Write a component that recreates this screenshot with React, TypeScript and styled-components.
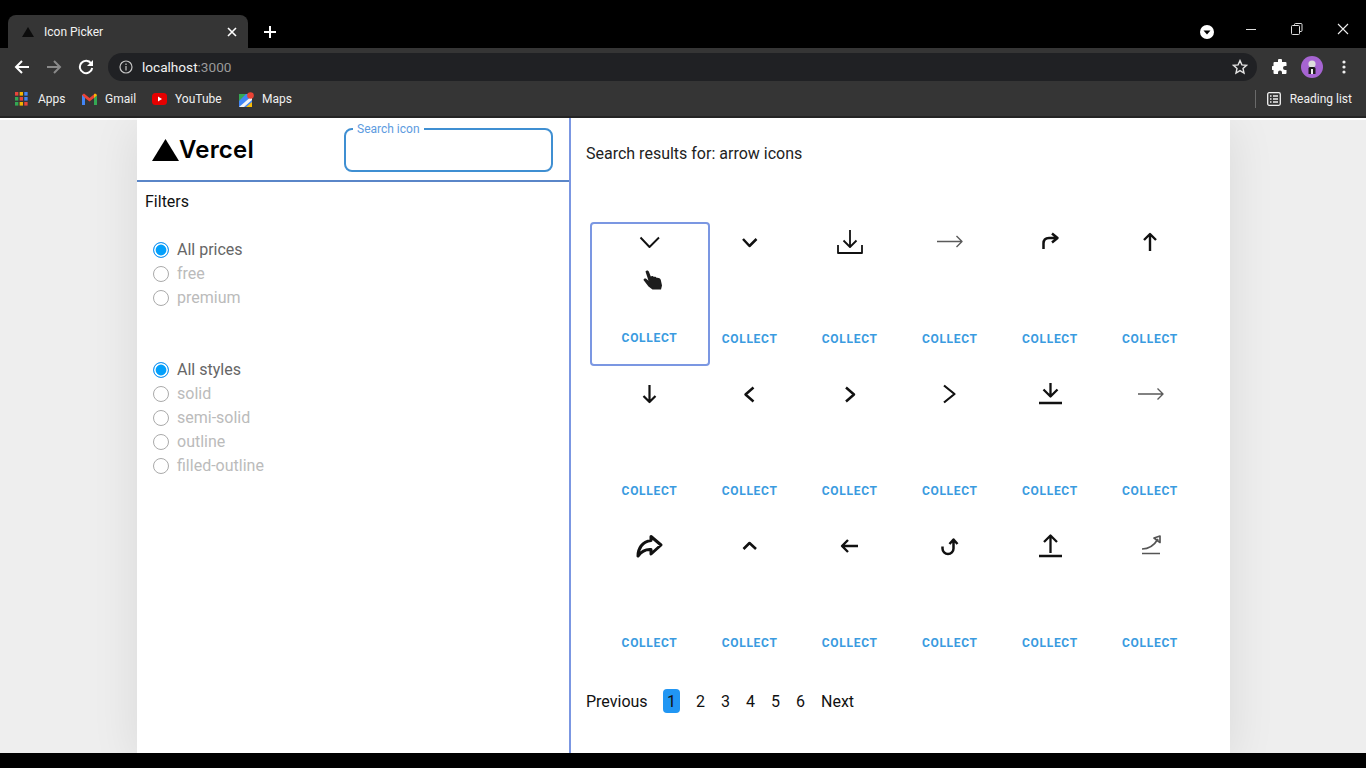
import React from "react";
import styled, { createGlobalStyle } from "styled-components";

const GlobalStyle = createGlobalStyle`
  html, body {
    margin: 0;
    padding: 0;
    background: #000;
    font-family: Roboto, "Liberation Sans", sans-serif;
  }
  * { box-sizing: border-box; }
`;

const priceOptions = ["All prices", "free", "premium"];
const styleOptions = ["All styles", "solid", "semi-solid", "outline", "filled-outline"];

type IconDef = { d: string; width: number; color?: string };

// every icon sits in a 32x32 box centred on its grid column
const icons: IconDef[] = [
  { d: "M6.5 11.5L15.5 21L25 11.5", width: 1.9 },
  { d: "M9 13L15.5 20L22.5 13", width: 2.5 },
  { d: "M16 4V21M9.5 14.5L16 21L22.5 14.5M4 19V27H28V19", width: 1.8 },
  { d: "M3 15.5H28M22.5 10L28 15.5L22.5 21", width: 1.4, color: "#5a5a5a" },
  { d: "M9.5 23V17.5Q9.5 12 15 12H23M18 7.5L23.5 12L18 16.5", width: 2.5 },
  { d: "M16 8V25M10 14L16 8L22 14", width: 2.4 },
  { d: "M15.5 7V24M9.5 18L15.5 24L21.5 18", width: 2.2 },
  { d: "M19.5 9.5L11.5 16.5L19.5 23.5", width: 2.5 },
  { d: "M12 9.5L20 16.5L12 23.5", width: 2.5 },
  { d: "M10 7.5L20.5 16L10 24.5", width: 2.2 },
  { d: "M16.5 5V18M9.5 11.5L16.5 18.5L23.5 11.5M5 25H28", width: 2.3 },
  { d: "M4 16H29M23.5 10.5L29 16L23.5 21.5", width: 1.4, color: "#5a5a5a" },
  { d: "M17 6.5L27 15L17 24V19.5C11 19 7 22 4 26C4 19 8 11.5 17 10.5Z", width: 3 },
  { d: "M9.5 19L15.5 13L22 19", width: 2.6 },
  { d: "M24 16H8M14 10L8 16L14 22", width: 2.4 },
  { d: "M19.5 10V18.5A5.5 5.5 0 0 1 8.5 18.5V16.5M15.5 14L19.5 9.5L23.5 14", width: 2.5 },
  { d: "M16.5 6V23M10 12L16.5 5.5L23 12M5 26H28", width: 2.3 },
  { d: "M8 19Q18 19 24 9M20 8L26 6L26 12.5ZM8 23.5H26", width: 1.7, color: "#555" },
];

export default function App() {
  return (
    <Screen>
      <GlobalStyle />
      <TabStrip>
        <Tab>
          <svg width="12" height="10" viewBox="0 0 12 10">
            <path d="M6 0L12 10H0Z" fill="#0c0c0c" />
          </svg>
          <TabTitle>Icon Picker</TabTitle>
          <svg width="12" height="12" viewBox="0 0 12 12" stroke="#fff" strokeWidth="1.6">
            <path d="M2 2L10 10M10 2L2 10" />
          </svg>
        </Tab>
        <NewTab>
          <svg width="14" height="14" viewBox="0 0 14 14" stroke="#fff" strokeWidth="2">
            <path d="M7 1V13M1 7H13" />
          </svg>
        </NewTab>
        <StripSpacer />
        <TabSearch>
          <svg width="14" height="14" viewBox="0 0 14 14">
            <circle cx="7" cy="7" r="7" fill="#fff" />
            <path d="M3.5 5.5H10.5L7 9.5Z" fill="#000" />
          </svg>
        </TabSearch>
        <WindowButton>
          <svg width="12" height="12" viewBox="0 0 12 12" stroke="#ddd">
            <path d="M1 6.5H11" />
          </svg>
        </WindowButton>
        <WindowButton>
          <svg width="12" height="12" viewBox="0 0 12 12" fill="none" stroke="#ddd">
            <path d="M3.5 2.5V1.5Q3.5 .5 4.5 .5H10Q11 .5 11 1.5V7.5Q11 8.5 10 8.5H9M1.5 2.5H7.5Q8.5 2.5 8.5 3.5V10.5Q8.5 11.5 7.5 11.5H1.5Q.5 11.5 .5 10.5V3.5Q.5 2.5 1.5 2.5Z" />
          </svg>
        </WindowButton>
        <WindowButton>
          <svg width="12" height="12" viewBox="0 0 12 12" stroke="#eee" strokeWidth="1.1">
            <path d="M1 1L11 11M11 1L1 11" />
          </svg>
        </WindowButton>
      </TabStrip>

      <Toolbar>
        <NavButton>
          <svg width="16" height="16" viewBox="0 0 16 16" fill="none" stroke="#fff" strokeWidth="2">
            <path d="M15 8H2M8 2L2 8L8 14" />
          </svg>
        </NavButton>
        <NavButton>
          <svg width="16" height="16" viewBox="0 0 16 16" fill="none" stroke="#8a8a8a" strokeWidth="2">
            <path d="M1 8H14M8 2L14 8L8 14" />
          </svg>
        </NavButton>
        <NavButton>
          <svg width="16" height="16" viewBox="0 0 16 16" fill="none">
            <path d="M13.2 4.5A6.2 6.2 0 1 0 14.2 9" stroke="#fff" strokeWidth="2" />
            <path d="M15 1V7H9Z" fill="#fff" />
          </svg>
        </NavButton>
        <AddressBar>
          <svg width="14" height="14" viewBox="0 0 14 14" fill="none" stroke="#c4c4c4" strokeWidth="1.2">
            <circle cx="7" cy="7" r="6" />
            <path d="M7 6V10.5M7 3.5V5" />
          </svg>
          <Url>
            localhost<UrlPort>:3000</UrlPort>
          </Url>
          <StarIcon>
            <svg width="16" height="16" viewBox="0 0 16 16" fill="none" stroke="#e4e4e4" strokeWidth="1.4">
              <path d="M8 1.6L9.9 5.9L14.5 6.3L11 9.4L12 14L8 11.6L4 14L5 9.4L1.5 6.3L6.1 5.9Z" />
            </svg>
          </StarIcon>
        </AddressBar>
        <ExtensionArea>
          <NavButton>
            <svg width="16" height="16" viewBox="0 0 16 16" fill="#fff">
              <path d="M6 1.5A2 2 0 0 1 10 1.5V3H13.5A1 1 0 0 1 14.5 4V7H13A2 2 0 0 0 13 11H14.5V14A1 1 0 0 1 13.5 15H10V13.5A2 2 0 0 0 6 13.5V15H2.5A1 1 0 0 1 1.5 14V11H1A2 2 0 0 1 1 7H1.5V4A1 1 0 0 1 2.5 3H6Z" />
            </svg>
          </NavButton>
          <NavButton>
            <svg width="22" height="22" viewBox="0 0 22 22">
              <circle cx="11" cy="11" r="11" fill="#a664d2" />
              <circle cx="11" cy="8" r="3.6" fill="#ddd" />
              <path d="M7.5 18V12.5Q7.5 11 9 11H13Q14.5 11 14.5 12.5V18Z" fill="#1b1b1b" />
              <rect x="10" y="13" width="2" height="5" fill="#eee" />
            </svg>
          </NavButton>
          <NavButton>
            <svg width="4" height="14" viewBox="0 0 4 14" fill="#eee">
              <circle cx="2" cy="2" r="1.6" />
              <circle cx="2" cy="7" r="1.6" />
              <circle cx="2" cy="12" r="1.6" />
            </svg>
          </NavButton>
        </ExtensionArea>
      </Toolbar>

      <BookmarksBar>
        <Bookmark $width={67} $gap={10}>
          <svg width="13" height="14" viewBox="0 0 14 14" preserveAspectRatio="none">
            {["#e8453c", "#f4b400", "#4285f4", "#34a853", "#e8453c", "#4285f4", "#34a853", "#f4b400", "#e8453c"].map((c, i) => (
              <rect key={i} x={(i % 3) * 5} y={Math.floor(i / 3) * 5} width="3.6" height="3.6" fill={c} />
            ))}
          </svg>
          Apps
        </Bookmark>
        <Bookmark $width={70} $gap={8}>
          <svg width="15" height="12" viewBox="0 0 15 12">
            <path d="M0 2V12H3V5L7.5 8.5L12 5V12H15V2L13 .5L7.5 5L2 .5Z" fill="#ea4335" />
            <path d="M0 2V12H3V5Z" fill="#4285f4" />
            <path d="M15 2V12H12V5Z" fill="#34a853" />
            <path d="M15 2L13 .5L12 1.5V5Z" fill="#fbbc04" />
          </svg>
          Gmail
        </Bookmark>
        <Bookmark $width={87} $gap={8}>
          <svg width="15" height="12" viewBox="0 0 15 12">
            <rect width="15" height="12" rx="3.5" fill="#e60000" />
            <path d="M6 3.5L10 6L6 8.5Z" fill="#fff" />
          </svg>
          YouTube
        </Bookmark>
        <Bookmark $width={70} $gap={8}>
          <svg width="15" height="15" viewBox="0 0 15 15">
            <rect y="2" width="13" height="13" fill="#4285f4" />
            <path d="M0 2H7L0 9Z" fill="#34a853" />
            <path d="M0 15L13 4V8L5 15Z" fill="#f4f4f4" />
            <path d="M7 15L13 10V15Z" fill="#fbbc04" />
            <circle cx="11.5" cy="3.5" r="3.3" fill="#ea4335" />
          </svg>
          Maps
        </Bookmark>
        <BookmarkSpacer />
        <BarDivider />
        <ReadingList>
          <svg width="14" height="14" viewBox="0 0 14 14" fill="none" stroke="#f2f2f2" strokeWidth="1.3">
            <rect x=".7" y=".7" width="12.6" height="12.6" rx="1.5" />
            <path d="M3 4H4.5M6 4H11M3 7H4.5M6 7H11M3 10H4.5M6 10H11" />
          </svg>
          Reading list
        </ReadingList>
      </BookmarksBar>

      <Viewport>
        <Card>
          <Sidebar>
            <SidebarHeader>
              <Logo>
                <svg width="27" height="22" viewBox="0 0 27 22">
                  <path d="M13.5 0L27 22H0Z" fill="#000" />
                </svg>
                <LogoText>Vercel</LogoText>
              </Logo>
              <SearchField>
                <SearchLabel>Search icon</SearchLabel>
              </SearchField>
            </SidebarHeader>
            <FiltersTitle>Filters</FiltersTitle>
            <RadioGroup>
              {priceOptions.map((option, i) => (
                <RadioRow key={option} $checked={i === 0}>
                  <RadioCircle $checked={i === 0} />
                  {option}
                </RadioRow>
              ))}
            </RadioGroup>
            <RadioGroup>
              {styleOptions.map((option, i) => (
                <RadioRow key={option} $checked={i === 0}>
                  <RadioCircle $checked={i === 0} />
                  {option}
                </RadioRow>
              ))}
            </RadioGroup>
          </Sidebar>

          <Results>
            <ResultsTitle>Search results for: arrow icons</ResultsTitle>
            <IconGrid>
              {icons.map((icon, i) => (
                <IconCell key={i}>
                  {i === 0 && <SelectedFrame />}
                  <IconSlot>
                    <svg
                      width="32"
                      height="32"
                      viewBox="0 0 32 32"
                      fill="none"
                      stroke={icon.color || "#111"}
                      strokeWidth={icon.width}
                      strokeLinejoin="round"
                    >
                      <path d={icon.d} />
                    </svg>
                  </IconSlot>
                  <CollectButton $raised={i === 0}>COLLECT</CollectButton>
                  {i === 0 && (
                    <HandCursor>
                      <svg width="20" height="20" viewBox="0 0 20 20" fill="#1c1c1c">
                        <path d="M2.5 1.5C3.5 0 5.5 .3 6 2L7.8 6.5C8.8 5.5 10.3 6 10.8 7C11.8 6.5 13.3 7 13.8 8C14.8 7.5 17.5 8.5 17.8 10L19 15.5L18 19.5H9.5L5.5 16.5L.5 10C.5 9 2 8 3.5 9L5.5 10.8Z" />
                      </svg>
                    </HandCursor>
                  )}
                </IconCell>
              ))}
            </IconGrid>
            <Pagination>
              <PageLabel>Previous</PageLabel>
              <ActivePage>1</ActivePage>
              {[2, 3, 4, 5, 6].map((n) => (
                <PageNumber key={n}>{n}</PageNumber>
              ))}
              <NextLabel>Next</NextLabel>
            </Pagination>
          </Results>
        </Card>
      </Viewport>
      <BottomBar />
    </Screen>
  );
}

const Screen = styled.div`
  width: 1366px;
  height: 768px;
  display: flex;
  flex-direction: column;
  overflow: hidden;
  background: #000;
`;

const TabStrip = styled.div`
  height: 48px;
  flex: none;
  display: flex;
  align-items: flex-end;
  padding-left: 8px;
  background: #000;
`;

const Tab = styled.div`
  width: 240px;
  height: 33px;
  display: flex;
  align-items: center;
  padding: 0 10px 0 14px;
  background: #353535;
  border-radius: 8px 8px 0 0;
`;

const TabTitle = styled.span`
  flex: 1;
  margin-left: 10px;
  color: #f2f2f2;
  font-size: 12px;
`;

const NewTab = styled.div`
  width: 44px;
  height: 33px;
  display: flex;
  align-items: center;
  justify-content: center;
`;

const StripSpacer = styled.div`
  flex: 1;
`;

const TabSearch = styled.div`
  width: 46px;
  height: 33px;
  margin-right: -2px;
  display: flex;
  align-items: center;
  justify-content: center;
`;

const WindowButton = styled.div`
  width: 46px;
  height: 48px;
  padding-top: 10px;
  display: flex;
  align-items: center;
  justify-content: center;
`;

const Toolbar = styled.div`
  height: 38px;
  flex: none;
  display: flex;
  align-items: center;
  padding-left: 6px;
  background: #353535;
`;

const NavButton = styled.div`
  width: 32px;
  height: 32px;
  flex: none;
  display: flex;
  align-items: center;
  justify-content: center;
`;

const AddressBar = styled.div`
  flex: 1;
  height: 28px;
  margin-left: 6px;
  display: flex;
  align-items: center;
  padding-left: 11px;
  background: #202124;
  border-radius: 14px;
`;

const Url = styled.span`
  flex: 1;
  margin-left: 9px;
  color: #f2f2f2;
  font-size: 13.6px;
`;

const UrlPort = styled.span`
  color: #9a9a9a;
`;

const StarIcon = styled.span`
  display: flex;
  margin-right: 9px;
`;

const ExtensionArea = styled.div`
  display: flex;
  align-items: center;
  margin-left: 7px;
  padding-right: 6px;
`;

const BookmarksBar = styled.div`
  height: 32px;
  flex: none;
  display: flex;
  align-items: center;
  padding: 0 0 4px 15px;
  background: #353535;
  border-bottom: 2px solid #242424;
`;

const Bookmark = styled.div<{ $width: number; $gap: number }>`
  width: ${(p) => p.$width}px;
  display: flex;
  align-items: center;
  gap: ${(p) => p.$gap}px;
  color: #f0f0f0;
  font-size: 12px;
`;

const BookmarkSpacer = styled.div`
  flex: 1;
`;

const BarDivider = styled.div`
  width: 1px;
  height: 18px;
  background: #6a6a6a;
`;

const ReadingList = styled.div`
  display: flex;
  align-items: center;
  gap: 9px;
  margin: 0 14px 0 11px;
  color: #f0f0f0;
  font-size: 12px;
`;

const Viewport = styled.div`
  height: 635px;
  flex: none;
  padding-left: 137px;
  background: #eeeeee;
  box-shadow: inset 0 2px 0 #fff;
  overflow: hidden;
`;

const Card = styled.div`
  width: 1093px;
  height: 100%;
  display: flex;
  background: #fff;
  box-shadow: 0 8px 45px rgba(0, 0, 0, 0.09);
`;

const Sidebar = styled.div`
  width: 434px;
  flex: none;
  border-right: 2px solid #7b97e2;
`;

const SidebarHeader = styled.div`
  height: 64px;
  display: flex;
  align-items: center;
  justify-content: space-between;
  padding: 0 16px 0 15px;
  border-bottom: 2px solid #5a86c8;
`;

const Logo = styled.div`
  display: flex;
  align-items: flex-end;
  margin-top: 1px;
`;

const LogoText = styled.span`
  margin-bottom: -1px;
  color: #000;
  font-family: Inter, sans-serif;
  font-size: 24px;
  line-height: 24px;
  font-weight: 600;
  letter-spacing: 0.2px;
`;

const SearchField = styled.div`
  position: relative;
  width: 209px;
  height: 44px;
  margin-top: 2px;
  border: 2px solid #3f8fd2;
  border-radius: 8px;
`;

const SearchLabel = styled.span`
  position: absolute;
  top: -8px;
  left: 7px;
  padding: 0 4px;
  background: #fff;
  color: #5d9be0;
  font-size: 12px;
  line-height: 14px;
`;

const FiltersTitle = styled.div`
  padding: 10px 0 0 8px;
  height: 55px;
  color: #111;
  font-size: 16px;
  line-height: 20px;
`;

const RadioGroup = styled.div`
  display: flex;
  flex-direction: column;
  padding-left: 15.5px;
  margin-bottom: 48px;
`;

const RadioRow = styled.div<{ $checked: boolean }>`
  height: 24px;
  display: flex;
  align-items: center;
  gap: 8.5px;
  color: ${(p) => (p.$checked ? "#666" : "#bbb")};
  font-size: 16px;
`;

const RadioCircle = styled.span<{ $checked: boolean }>`
  width: 16px;
  height: 16px;
  margin-top: 1px;
  flex: none;
  border-radius: 50%;
  border: 1.6px solid ${(p) => (p.$checked ? "#2196f3" : "#aaa")};
  background: ${(p) => (p.$checked ? "#03a0fb" : "#fff")};
  box-shadow: ${(p) => (p.$checked ? "inset 0 0 0 1.6px #fff" : "none")};
`;

const Results = styled.div`
  flex: 1;
  padding-left: 14px;
`;

const ResultsTitle = styled.div`
  height: 100px;
  padding: 26px 0 0 1px;
  color: #222;
  font-size: 16px;
  line-height: 20px;
`;

const IconGrid = styled.div`
  display: grid;
  grid-template-columns: repeat(6, 100.1px);
  grid-auto-rows: 152px;
  margin-left: 14.5px;
`;

const IconCell = styled.div`
  position: relative;
  display: flex;
  flex-direction: column;
  align-items: center;
`;

const SelectedFrame = styled.div`
  position: absolute;
  top: 4px;
  left: -10px;
  width: 120px;
  height: 144px;
  border: 2px solid #7b97e2;
  border-radius: 4px;
`;

const IconSlot = styled.div`
  height: 32px;
  margin-top: 8px;
  display: flex;
`;

const CollectButton = styled.div<{ $raised: boolean }>`
  margin-top: ${(p) => (p.$raised ? 72 : 73)}px;
  color: #3a9be0;
  font-size: 12px;
  font-weight: 700;
  line-height: 16px;
  letter-spacing: 0.7px;
`;

const HandCursor = styled.div`
  position: absolute;
  top: 52px;
  left: 43px;
`;

const Pagination = styled.div`
  display: flex;
  align-items: center;
  height: 24px;
  margin-top: 15px;
  padding-left: 1px;
  color: #111;
  font-size: 16px;
`;

const PageLabel = styled.span`
  width: 62px;
  margin-right: 15px;
`;

const ActivePage = styled.span`
  width: 17px;
  height: 24px;
  margin-right: 8px;
  display: flex;
  align-items: center;
  justify-content: center;
  background: #2196f3;
  border-radius: 4px;
`;

const PageNumber = styled.span`
  width: 25px;
  text-align: center;
`;

const NextLabel = styled.span`
  margin-left: 8px;
`;

const BottomBar = styled.div`
  flex: 1;
  background: #000;
`;
